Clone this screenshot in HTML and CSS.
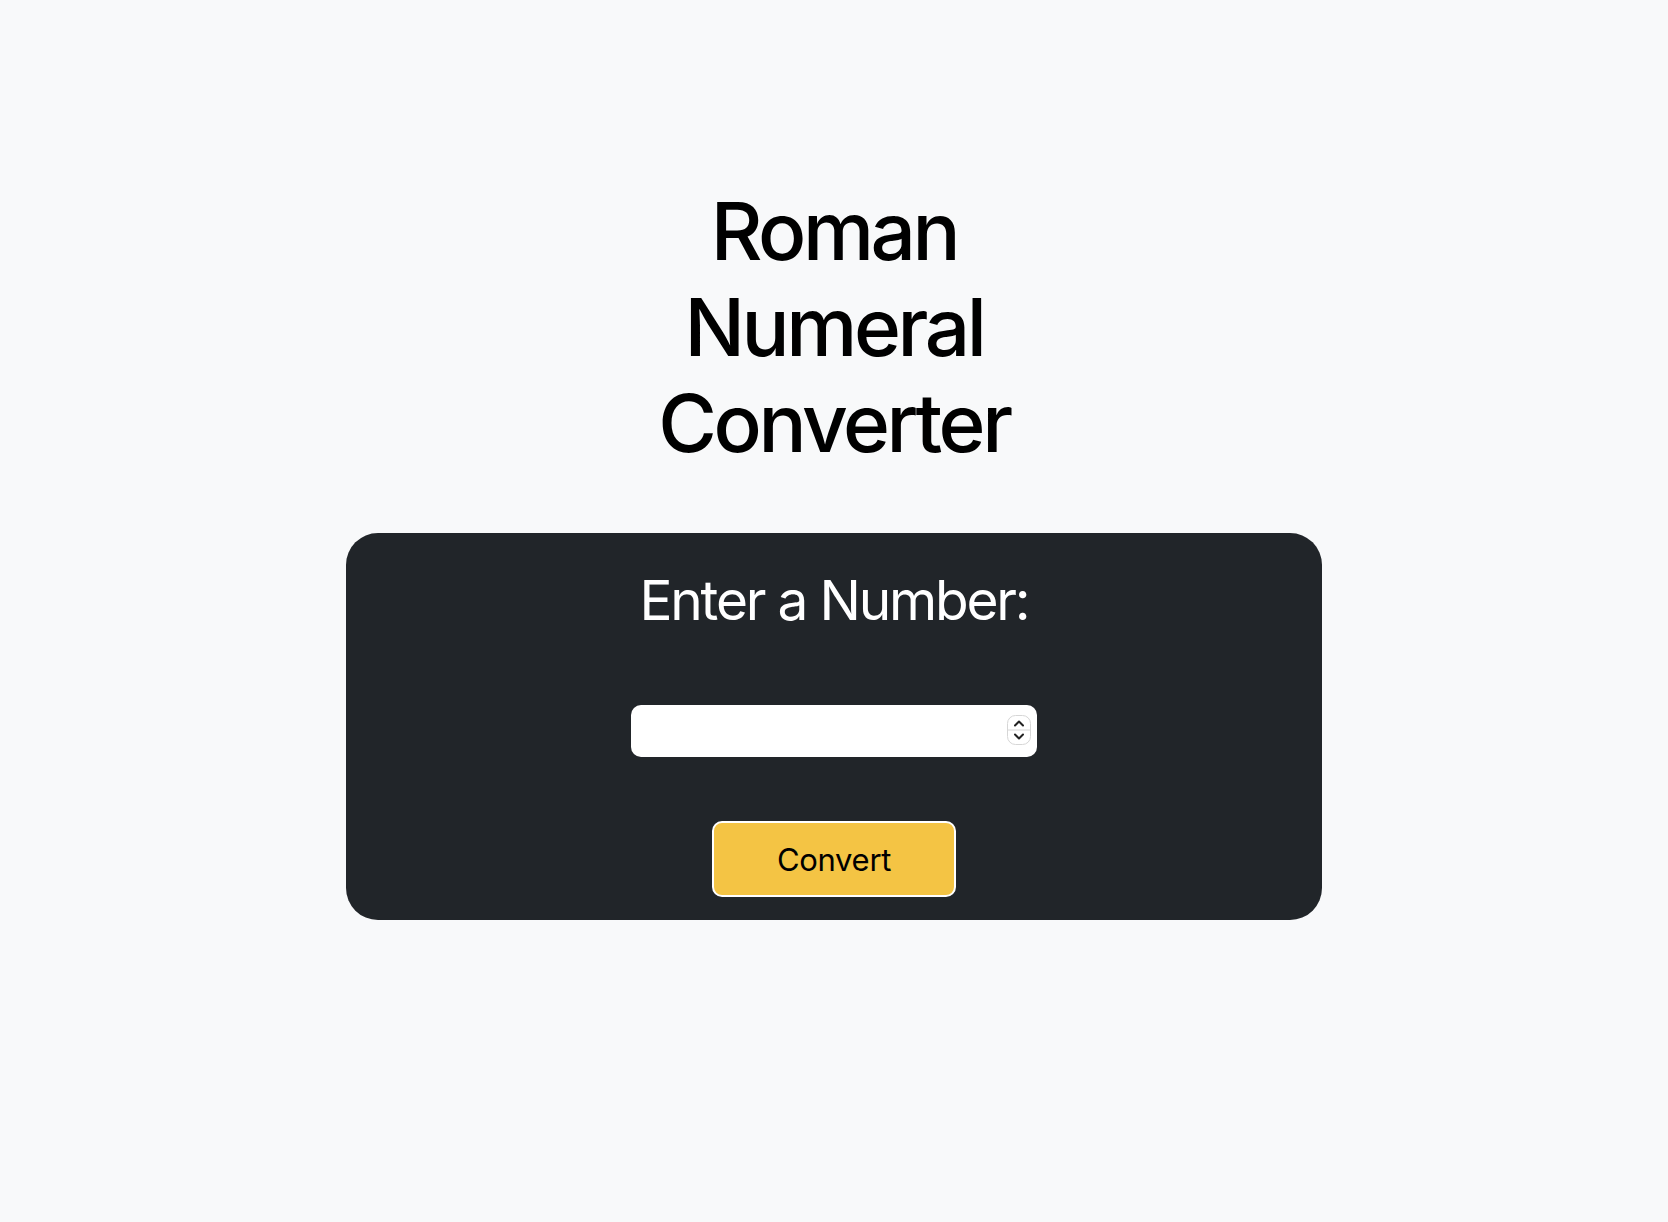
FILE: index.html
```html
<!DOCTYPE html>
<html lang="en">
<head>
<meta charset="utf-8">
<title>Roman Numeral Converter</title>
<link rel="stylesheet" href="styles.css">
</head>
<body>
<main class="page">
  <h1 class="title">Roman Numeral Converter</h1>
  <form class="card" onsubmit="return false">
    <label class="label" for="number">Enter a Number:</label>
    <div class="field">
      <input class="input" id="number" type="number">
      <span class="spinner" aria-hidden="true">
        <svg width="24" height="30" viewBox="0 0 24 30">
          <rect x="0.5" y="0.5" width="23" height="29" rx="8" fill="#ffffff" stroke="#d6d6d6"/>
          <line x1="1" y1="15" x2="23" y2="15" stroke="#d6d6d6"/>
          <path d="M8 10.5 L12 6.5 L16 10.5" fill="none" stroke="#222" stroke-width="2" stroke-linecap="round" stroke-linejoin="round"/>
          <path d="M8 19.5 L12 23.5 L16 19.5" fill="none" stroke="#222" stroke-width="2" stroke-linecap="round" stroke-linejoin="round"/>
        </svg>
      </span>
    </div>
    <button class="btn" type="button">Convert</button>
  </form>
</main>
</body>
</html>
```
FILE: styles.css
```css
html, body {
  margin: 0;
  padding: 0;
}
body {
  background: #f8f9fa;
  font-family: Inter, "Noto Sans", "Liberation Sans", sans-serif;
  color: #000;
}
.page {
  display: flex;
  flex-direction: column;
  align-items: center;
  padding-top: 183px;
}
.title {
  margin: 0;
  width: min-content;
  text-align: center;
  font-size: 80px;
  font-weight: 500;
  line-height: 96px;
  letter-spacing: -3.4px;
}
.card {
  margin-top: 62px;
  width: 976px;
  box-sizing: border-box;
  background: #212529;
  border-radius: 32px;
  display: flex;
  flex-direction: column;
  align-items: center;
  padding: 34px 0 23px;
}
.label {
  color: #ffffff;
  font-size: 55px;
  font-weight: 400;
  line-height: 67px;
  letter-spacing: -2.2px;
}
.field {
  position: relative;
  margin-top: 71px;
  width: 406px;
  height: 52px;
}
.input {
  display: block;
  width: 100%;
  height: 100%;
  box-sizing: border-box;
  border: none;
  border-radius: 10px;
  background: #fff;
  font: inherit;
  font-size: 24px;
  padding: 0 40px 0 12px;
  -moz-appearance: textfield;
  appearance: textfield;
}
.input::-webkit-inner-spin-button,
.input::-webkit-outer-spin-button {
  -webkit-appearance: none;
  margin: 0;
}
.spinner {
  position: absolute;
  right: 6px;
  top: 10px;
  width: 24px;
  height: 30px;
  display: block;
}
.spinner svg {
  display: block;
}
.btn {
  margin-top: 64px;
  width: 244px;
  height: 76px;
  box-sizing: border-box;
  background: #f4c444;
  border: 2px solid #ffffff;
  border-radius: 10px;
  font-family: inherit;
  font-size: 31px;
  font-weight: 400;
  letter-spacing: -0.3px;
  color: #000;
  cursor: pointer;
  padding: 0;
}
```
